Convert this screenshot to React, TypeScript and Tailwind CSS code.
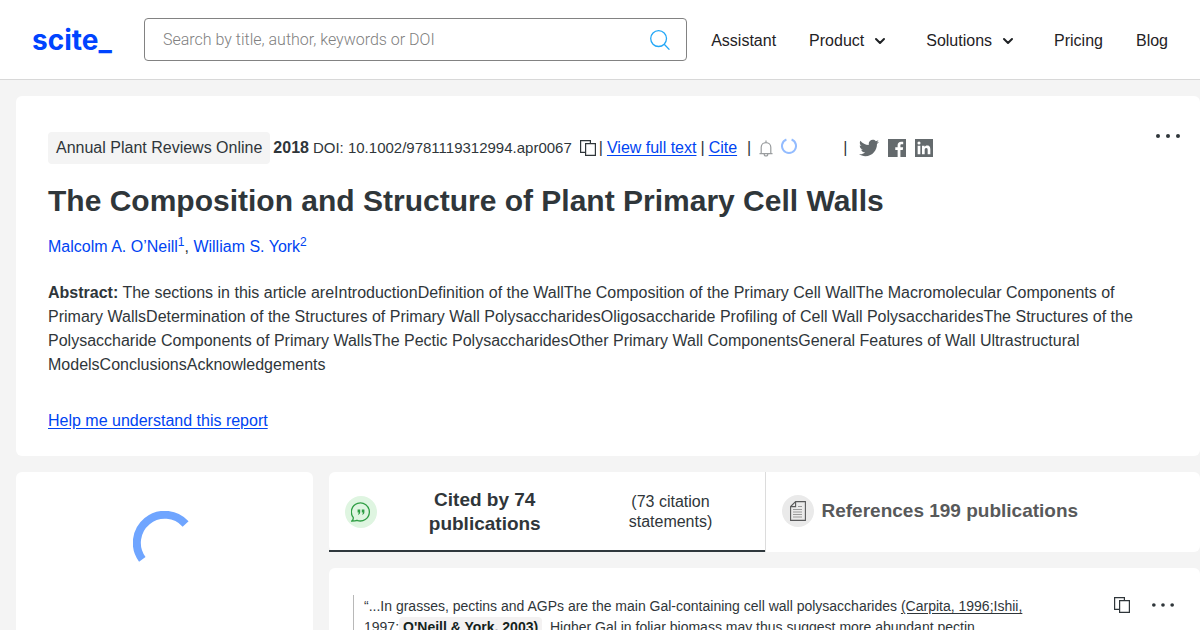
import type { ReactNode } from "react";
import { ChevronDown } from "lucide-react";

const NAV_ITEMS = [
  { label: "Assistant", menu: false },
  { label: "Product", menu: true },
  { label: "Solutions", menu: true },
  { label: "Pricing", menu: false },
  { label: "Blog", menu: false },
];

const SOCIAL_ICONS = [
  {
    name: "Twitter",
    size: "size-5",
    path: "M23.954 4.569c-.885.389-1.83.654-2.825.775 1.014-.611 1.794-1.574 2.163-2.723-.951.555-2.005.959-3.127 1.184-.896-.959-2.173-1.559-3.591-1.559-2.717 0-4.92 2.203-4.92 4.917 0 .39.045.765.127 1.124C7.691 8.094 4.066 6.13 1.64 3.161c-.427.722-.666 1.561-.666 2.475 0 1.71.87 3.213 2.188 4.096-.807-.026-1.566-.248-2.228-.616v.061c0 2.385 1.693 4.374 3.946 4.827-.413.111-.849.171-1.296.171-.314 0-.615-.03-.916-.086.631 1.953 2.445 3.377 4.604 3.417-1.68 1.319-3.809 2.105-6.102 2.105-.39 0-.779-.023-1.17-.067 2.189 1.394 4.768 2.209 7.557 2.209 9.054 0 13.999-7.496 13.999-13.986 0-.209 0-.42-.015-.63.961-.689 1.8-1.56 2.46-2.548l-.047-.02z",
  },
  {
    name: "Facebook",
    size: "size-[18px]",
    path: "M24 0H0v24h12.818v-9.294H9.689v-3.621h3.129V8.41c0-3.099 1.894-4.785 4.659-4.785 1.325 0 2.464.097 2.796.141v3.24h-1.921c-1.5 0-1.792.721-1.792 1.771v2.311h3.584l-.465 3.63H16.56V24H24z",
  },
  {
    name: "LinkedIn",
    size: "size-[18px]",
    path: "M20.447 20.452h-3.554v-5.569c0-1.328-.027-3.037-1.852-3.037-1.853 0-2.136 1.445-2.136 2.939v5.667H9.351V9h3.414v1.561h.046c.477-.9 1.637-1.85 3.37-1.85 3.601 0 4.267 2.37 4.267 5.455v6.286zM5.337 7.433a2.062 2.062 0 0 1-2.063-2.065 2.064 2.064 0 1 1 2.063 2.065zm1.782 13.019H3.555V9h3.564v11.452zM24 0H0v24h24z",
  },
];

function CopyIcon() {
  return (
    <svg viewBox="0 0 16 16" className="size-4" fill="none" stroke="currentColor" strokeWidth="1.2">
      <path d="M5 12.4H.6V.6h9.8V3" />
      <path d="M5.6 3.6h9.8v11.8H5.6z" />
    </svg>
  );
}

function MoreIcon({ small = false }: { small?: boolean }) {
  return (
    <svg viewBox="0 0 24 4" className={small ? "h-1 w-[22px]" : "h-1 w-6"} fill="currentColor">
      <circle cx="2" cy="2" r="2" />
      <circle cx="12" cy="2" r="2" />
      <circle cx="22" cy="2" r="2" />
    </svg>
  );
}

function TextLink({ children }: { children: ReactNode }) {
  return (
    <a href="#" className="text-[#0044f2] underline underline-offset-2">
      {children}
    </a>
  );
}

function Header() {
  return (
    <header className="flex h-20 shrink-0 items-center border-b border-[#d8d8d8] bg-white px-8 text-[#1f2225]">
      <a href="#" className="w-28 shrink-0 font-['Inter',sans-serif] text-[28px] leading-9 font-bold text-[#0044ff]">
        scite_
      </a>
      <form className="flex h-[43px] flex-1 items-center rounded border border-[#828282] pr-4 pl-[18px]">
        <input
          type="search"
          aria-label="Search"
          placeholder="Search by title, author, keywords or DOI"
          className="min-w-0 flex-1 font-['Roboto',sans-serif] text-base font-light outline-none placeholder:text-[#808080]"
        />
        <button type="button" aria-label="Submit search" className="text-[#22a7f7]">
          <svg viewBox="0 0 20 20" className="size-5" fill="none" stroke="currentColor" strokeWidth="1.3">
            <circle cx="8.6" cy="8.6" r="7.9" />
            <path d="M14.2 14.2 19.4 19.6" />
          </svg>
        </button>
      </form>
      <nav className="ml-6 flex items-center gap-[33px] pt-0.5">
        {NAV_ITEMS.map((item) =>
          item.menu ? (
            <button key={item.label} type="button" className="flex items-center gap-2 pr-[5px]">
              {item.label}
              <ChevronDown className="size-4" strokeWidth={3} />
            </button>
          ) : (
            <a key={item.label} href="#">
              {item.label}
            </a>
          ),
        )}
      </nav>
    </header>
  );
}

function PaperMeta() {
  return (
    <div className="flex h-8 items-center whitespace-nowrap">
      <span className="rounded bg-[#f4f4f4] px-2 py-1">Annual Plant Reviews Online</span>
      <b className="ml-[3px]">2018</b>
      <span className="ml-1 text-[15px]">DOI: 10.1002/9781119312994.apr0067</span>
      <button type="button" aria-label="Copy DOI" className="ml-2">
        <CopyIcon />
      </button>
      <div className="ml-[3px] flex gap-1">
        <span>|</span>
        <TextLink>View full text</TextLink>
        <span>|</span>
        <TextLink>Cite</TextLink>
      </div>
      <span className="ml-2.5">|</span>
      <button type="button" aria-label="Get notified" className="ml-2 text-[#9a9d9f]">
        <svg viewBox="0 0 14 17" className="h-[17px] w-3.5" fill="none" stroke="currentColor" strokeWidth="1.2">
          <path d="M.5 13.6h13M2.2 13.4V7.2a4.800 4.600 0 0 1 9.600 0v6.2M7 2.6V.4" />
          <path d="M5.2 14c0 1.400.800 2 1.800 2s1.800-.600 1.800-2" />
        </svg>
      </button>
      <svg viewBox="0 0 16 16" className="mb-1 ml-2 size-4" fill="none" stroke="#93bcff" strokeWidth="2">
        <path d="M5.400 1.500a7 7 0 1 0 5.200 0" />
      </svg>
      <span className="ml-[46px]">|</span>
      <div className="ml-3 flex items-center gap-[9px] text-[#646a6d]">
        {SOCIAL_ICONS.map((icon) => (
          <a key={icon.name} href="#" aria-label={`Share on ${icon.name}`}>
            <svg viewBox="0 0 24 24" className={icon.size} fill="currentColor">
              <path fillRule="evenodd" d={icon.path} />
            </svg>
          </a>
        ))}
      </div>
    </div>
  );
}

function PaperCard() {
  return (
    <section className="relative rounded-md bg-white px-8 pt-9 pb-[23px]">
      <button type="button" aria-label="More actions" className="absolute top-[38px] right-5">
        <MoreIcon />
      </button>
      <PaperMeta />
      <h1 className="mt-4 text-[30px] leading-[42px] font-bold">
        The Composition and Structure of Plant Primary Cell Walls
      </h1>
      <p className="mt-[13px] leading-6">
        <a href="#" className="text-[#0044f2]">
          Malcolm A. O’Neill<sup className="text-xs">1</sup>
        </a>
        ,{" "}
        <a href="#" className="text-[#0044f2]">
          William S. York<sup className="text-xs">2</sup>
        </a>
      </p>
      <p className="mt-[22px] max-w-[1100px] leading-6">
        <b>Abstract:</b> The sections in this article areIntroductionDefinition of the WallThe Composition of the
        Primary Cell WallThe Macromolecular Components of Primary WallsDetermination of the Structures of Primary Wall
        PolysaccharidesOligosaccharide Profiling of Cell Wall PolysaccharidesThe Structures of the Polysaccharide
        Components of Primary WallsThe Pectic PolysaccharidesOther Primary Wall ComponentsGeneral Features of Wall
        Ultrastructural ModelsConclusionsAcknowledgements
      </p>
      <p className="mt-8 leading-6">
        <TextLink>Help me understand this report</TextLink>
      </p>
    </section>
  );
}

function LoadingPanel() {
  return (
    <aside className="flex w-[297px] shrink-0 justify-center rounded-md bg-white pt-[39px]">
      <svg viewBox="0 0 64 64" className="size-16" fill="none" stroke="#6fa5ff" strokeWidth="8">
        <path d="M9.300 48.400A28 28 0 0 1 52.600 13" />
      </svg>
    </aside>
  );
}

function Tabs() {
  return (
    <div role="tablist" className="flex h-20 rounded-md bg-white">
      <button
        type="button"
        role="tab"
        aria-selected="true"
        className="flex w-1/2 items-center border-b-2 border-[#2f383d] px-4 pt-0.5"
      >
        <span className="flex size-8 shrink-0 items-center justify-center rounded-full bg-[#dff5e1] text-[#2f9e44]">
          <svg viewBox="0 0 20 20" className="size-5" fill="none" stroke="currentColor" strokeWidth="1.3">
            <path d="M.8 19c1.200-1 1.700-2.300 1.400-3.600A9 9 0 1 1 6 18.300C4.500 19 2.800 19 .8 19z" />
            <path
              d="M6.600 7.500h2.600v2.600c0 1.400-.6 2.200-1.900 2.700l-.4-.8c.7-.3 1-.8 1-1.500H6.600zM10.800 7.500h2.600v2.600c0 1.400-.6 2.200-1.900 2.700l-.4-.8c.7-.3 1-.8 1-1.500h-1.300z"
              fill="currentColor"
              stroke="none"
            />
          </svg>
        </span>
        <span className="flex-1 text-[19px] leading-6 font-bold">
          Cited by 74
          <br />
          publications
        </span>
        <span className="w-[156px] leading-5">
          (73 citation
          <br />
          statements)
        </span>
      </button>
      <button
        type="button"
        role="tab"
        aria-selected="false"
        className="flex flex-1 items-center gap-2 border-l border-[#dcdcdc] px-4 pb-0.5 text-[#58595a]"
      >
        <span className="flex size-8 items-center justify-center rounded-full bg-[#eaeaea]">
          <svg viewBox="0 0 16 20" className="h-5 w-4" fill="none" stroke="currentColor" strokeWidth="1.100">
            <path d="M5.600.6h9.800v18.800H.6V5.600zM5.600.6v5H.6" />
            <path d="M8 5.500h4M3 8.500h9M3 11h9M3 13.500h9M3 16h9" stroke="#9a9a9a" />
          </svg>
        </span>
        <span className="text-[19px] font-bold">References 199 publications</span>
      </button>
    </div>
  );
}

function CitationStatement() {
  return (
    <article className="flex flex-1 items-start rounded-md bg-white pt-[27px] pr-[26px] pl-6">
      <blockquote className="w-[680px] border-l border-[#b8b8b8] pt-px pl-2.5 text-sm leading-[21px]">
        “...In grasses, pectins and AGPs are the main Gal-containing cell wall polysaccharides{" "}
        <a href="#" className="underline underline-offset-2">
          (Carpita, 1996;Ishii,
        </a>
        <br />
        1997;
        <b className="rounded bg-[#f4f2f2] px-1 py-0.5 text-[#14231c]">O'Neill &amp; York, 2003)</b>. Higher Gal in
        foliar biomass may thus suggest more abundant pectin
      </blockquote>
      <div className="ml-auto flex items-center gap-[22px] pt-0.5">
        <button type="button" aria-label="Copy statement">
          <CopyIcon />
        </button>
        <button type="button" aria-label="More actions">
          <MoreIcon small />
        </button>
      </div>
    </article>
  );
}

export default function App() {
  return (
    <div className="flex h-screen flex-col overflow-hidden bg-[#f4f4f4] font-['Liberation_Sans',Arial,sans-serif] text-base text-[#2f363a]">
      <Header />
      <main className="flex flex-1 flex-col gap-4 pt-4 pl-4">
        <PaperCard />
        <div className="flex flex-1 gap-4">
          <LoadingPanel />
          <div className="flex min-w-0 flex-1 flex-col gap-4">
            <Tabs />
            <CitationStatement />
          </div>
        </div>
      </main>
    </div>
  );
}
